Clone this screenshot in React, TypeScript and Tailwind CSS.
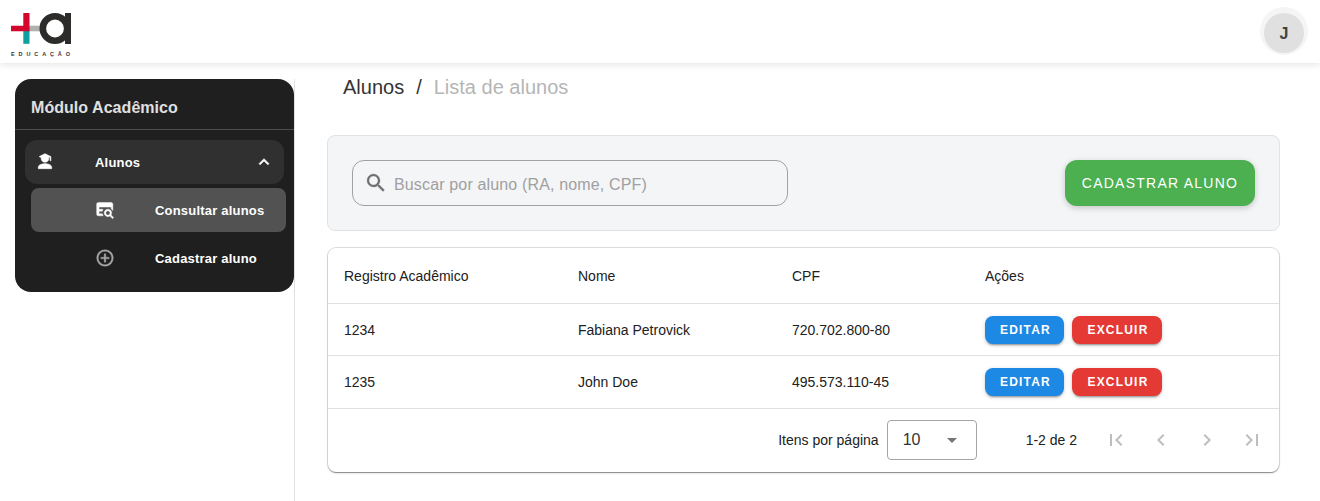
const paths = {
  student:
    'M16.6 8C16.6 10.21 14.5 12.4 12 12.4C9.5 12.4 7.4 10.21 7.4 8L7.6 6.9L5 5.5L12 2L19 5.5V10.5H18V6L16.4 6.9L16.6 8M12 14C16.42 14 20 15.79 20 18V20H4V18C4 15.79 7.58 14 12 14Z',
  up: 'M7.41,15.41L12,10.83L16.59,15.41L18,14L12,8L6,14L7.41,15.41Z',
  tableSearch:
    'M18.68,12.32C16.92,10.56 14.07,10.57 12.32,12.33C10.56,14.09 10.56,16.94 12.32,18.69C13.81,20.17 16.11,20.43 17.89,19.32L21,22.39L22.39,21L19.3,17.89C20.43,16.12 20.17,13.8 18.68,12.32M17.27,17.27C16.29,18.25 14.71,18.24 13.73,17.27C12.76,16.29 12.76,14.71 13.74,13.73C14.71,12.76 16.29,12.76 17.27,13.73C18.24,14.71 18.24,16.29 17.27,17.27M4,3H19.5C20.6,3 21.4,3.9 21.4,5V12.6L19.4,10.6V8.5H4.9V11.2H9.6L8.7,13.4H4.9V16.6H8.8L9.8,19H4C2.9,19 2,18.1 2,17V5C2,3.9 2.9,3 4,3Z',
  plusCircle:
    'M12,20C7.59,20 4,16.41 4,12C4,7.59 7.59,4 12,4C16.41,4 20,7.59 20,12C20,16.41 16.41,20 12,20M12,2A10,10 0 0,0 2,12A10,10 0 0,0 12,22A10,10 0 0,0 22,12A10,10 0 0,0 12,2M13,7H11V11H7V13H11V17H13V13H17V11H13V7Z',
  search:
    'M9.5,3A6.5,6.5 0 0,1 16,9.5C16,11.11 15.41,12.59 14.44,13.73L14.71,14H15.5L20.5,19L19,20.5L14,15.5V14.71L13.73,14.44C12.59,15.41 11.11,16 9.5,16A6.5,6.5 0 0,1 3,9.5A6.5,6.5 0 0,1 9.5,3M9.5,5C7,5 5,7 5,9.5C5,12 7,14 9.5,14C12,14 14,12 14,9.5C14,7 12,5 9.5,5Z',
  down: 'M7,10L12,15L17,10H7Z',
  first: 'M18.41,16.59L13.82,12L18.41,7.41L17,6L11,12L17,18L18.41,16.59M6,6H8V18H6V6Z',
  prev: 'M15.41,16.58L10.83,12L15.41,7.41L14,6L8,12L14,18L15.41,16.58Z',
  next: 'M8.59,16.58L13.17,12L8.59,7.41L10,6L16,12L10,18L8.59,16.58Z',
  last: 'M5.59,7.41L10.18,12L5.59,16.59L7,18L13,12L7,6L5.59,7.41M16,6H18V18H16V6Z',
};

function Icon({ name, className }: { name: keyof typeof paths; className: string }) {
  return (
    <svg viewBox="0 0 24 24" fill="currentColor" className={`shrink-0 ${className}`} aria-hidden="true">
      <path d={paths[name]} />
    </svg>
  );
}

function Logo() {
  return (
    <div className="flex w-[62px] flex-col">
      <svg viewBox="0 0 60 31" className="h-[31px] w-[60px]" aria-hidden="true">
        <rect x="17" y="12.7" width="14" height="5.6" fill="#b0b0b0" />
        <rect x="12.3" y="15.5" width="6.2" height="15.3" fill="#0f9fa3" />
        <path d="M12.3 0H18.5V18.3H0V12.7H12.3Z" fill="#d3062e" />
        <circle cx="44" cy="15.5" r="12.2" fill="#fff" stroke="#2d2c2b" strokeWidth="6.6" />
        <rect x="54" y="0" width="6" height="31" fill="#2d2c2b" />
      </svg>
      <div className="mt-[6px] flex h-[8px] w-[59px] justify-between text-[5.5px] leading-[8px] font-bold text-[#333]">
        {['E', 'D', 'U', 'C', 'A', 'Ç', 'Ã', 'O'].map((c, i) => (
          <span key={i}>{c}</span>
        ))}
      </div>
    </div>
  );
}

const students = [
  { ra: '1234', name: 'Fabiana Petrovick', cpf: '720.702.800-80', height: 'h-[52px]' },
  { ra: '1235', name: 'John Doe', cpf: '495.573.110-45', height: 'h-[53px]' },
];

const columns = 'grid grid-cols-[234px_214px_193px_1fr] items-center px-4';
const action =
  'h-7 rounded-lg pl-[2px] text-[12px] font-bold tracking-[1.2px] text-white shadow-[0_3px_1px_-2px_rgba(0,0,0,0.2),0_2px_2px_0_rgba(0,0,0,0.14),0_1px_5px_0_rgba(0,0,0,0.12)]';

export default function App() {
  return (
    <div className="flex h-[501px] flex-col overflow-hidden bg-white font-['Liberation_Sans',Arial,sans-serif] text-[#212121]">
      <header className="z-10 flex h-[63px] shrink-0 items-start justify-between bg-white pt-[13px] pr-[13px] pl-[11px] shadow-[0_1px_8px_rgba(0,0,0,0.12)]">
        <Logo />
        <div className="-mt-[6px] flex h-12 w-12 items-center justify-center rounded-full bg-[#f5f5f5] pt-1 -mr-px">
          <div className="flex h-10 w-10 items-center justify-center rounded-full bg-[#e0e0e0] pt-px text-[16px] font-bold text-[#424242]">
            J
          </div>
        </div>
      </header>

      <div className="flex min-h-0 flex-1 pt-4">
        <aside className="h-full w-[295px] shrink-0 border-r border-[#e0e0e0] pl-[15px]">
          <nav className="h-[213px] w-[279px] rounded-2xl bg-[#1f1f1f] font-bold">
            <div className="flex h-[51px] items-center border-b border-[#4c4c4c] px-4 pt-[8px] text-[16px] tracking-[0.05px] text-[#e0e0e0]">
              Módulo Acadêmico
            </div>
            <div className="mt-[10px] ml-[10px] flex h-11 w-[259px] items-center rounded-xl bg-[#303030] px-[10px] text-[13px] tracking-[0.2px] text-white">
              <Icon name="student" className="h-5 w-5 stroke-white stroke-[0.7]" />
              <span className="ml-[40px] flex-1 pt-[2px]">Alunos</span>
              <Icon name="up" className="h-5 w-5 stroke-white stroke-[0.7]" />
            </div>
            <div className="mt-1 ml-4 flex h-11 w-[255px] items-center rounded-lg bg-[#525252] pl-[64px] text-[13px] tracking-[0.2px] text-white">
              <Icon name="tableSearch" className="h-5 w-5 stroke-white stroke-[0.5]" />
              <span className="ml-[40px] pt-[2px]">Consultar alunos</span>
            </div>
            <div className="mt-1 ml-4 flex h-11 w-[255px] items-center pl-[64px] text-[13px] tracking-[0.2px] text-white">
              <Icon name="plusCircle" className="h-5 w-5 stroke-[#a8a8a8] stroke-[0.4] text-[#a8a8a8]" />
              <span className="ml-[40px] pt-[2px]">Cadastrar aluno</span>
            </div>
          </nav>
        </aside>

        <main className="flex min-w-0 flex-1 flex-col pr-10 pl-8">
          <div className="flex h-[56px] items-start pl-4 text-[20px] leading-[16px] text-[#333]">
            <span>Alunos</span>
            <span className="mx-[12px]">/</span>
            <span className="text-[#b5b5b5]">Lista de alunos</span>
          </div>

          <section className="flex h-24 shrink-0 items-center justify-between rounded-lg border border-[#e0e3e5] bg-[#f4f5f7] px-6">
            <div className="flex h-[46px] w-[436px] items-center rounded-xl border border-[#a0a1a2] pl-[11px] text-[16px] text-[#a0a0a0]">
              <Icon name="search" className="h-6 w-6 stroke-[#6f6f70] stroke-[0.3] text-[#6f6f70]" />
              <span className="ml-[6px] pt-[3px] tracking-[0.15px]">Buscar por aluno (RA, nome, CPF)</span>
            </div>
            <button className="h-[46px] w-[190px] rounded-xl bg-[#4caf50] text-[14px] tracking-[1.25px] text-white shadow-[0_2px_6px_rgba(0,0,0,0.2)]">
              CADASTRAR ALUNO
            </button>
          </section>

          <section className="mx-px mt-[17px] flex h-[224px] shrink-0 flex-col rounded-lg bg-white text-[14px] shadow-[0_2px_1px_-1px_rgba(0,0,0,0.2),0_1px_1px_0_rgba(0,0,0,0.14),0_1px_3px_0_rgba(0,0,0,0.12),0_0_0_1px_#e0e0e0]">
            <div className={`${columns} h-14 border-b border-[#e0e0e0] pt-[2px]`}>
              <span>Registro Acadêmico</span>
              <span>Nome</span>
              <span>CPF</span>
              <span>Ações</span>
            </div>
            {students.map((s) => (
              <div key={s.ra} className={`${columns} ${s.height} border-b border-[#e0e0e0]`}>
                <span className="pt-px">{s.ra}</span>
                <span className="pt-px">{s.name}</span>
                <span className="pt-px">{s.cpf}</span>
                <div className="flex gap-2">
                  <button className={`${action} w-[79px] bg-[#1e88e5]`}>EDITAR</button>
                  <button className={`${action} w-[90px] bg-[#e53935]`}>EXCLUIR</button>
                </div>
              </div>
            ))}
            <div className="flex flex-1 items-center justify-end pr-[14.5px] pb-px">
              <span>Itens por página</span>
              <div className="ml-2 flex h-10 w-[90px] items-center justify-between rounded border border-[#a6a6a6] pr-3 pl-[15px] text-[16px] text-[#333]">
                <span>10</span>
                <Icon name="down" className="h-6 w-6 text-[#757575]" />
              </div>
              <span className="mr-[26.5px] ml-[49px]">1-2 de 2</span>
              <div className="flex w-[161px] justify-between text-[#bdbdbd]">
                <Icon name="first" className="h-6 w-6" />
                <Icon name="prev" className="h-6 w-6" />
                <Icon name="next" className="h-6 w-6" />
                <Icon name="last" className="h-6 w-6" />
              </div>
            </div>
          </section>
        </main>
      </div>
    </div>
  );
}
